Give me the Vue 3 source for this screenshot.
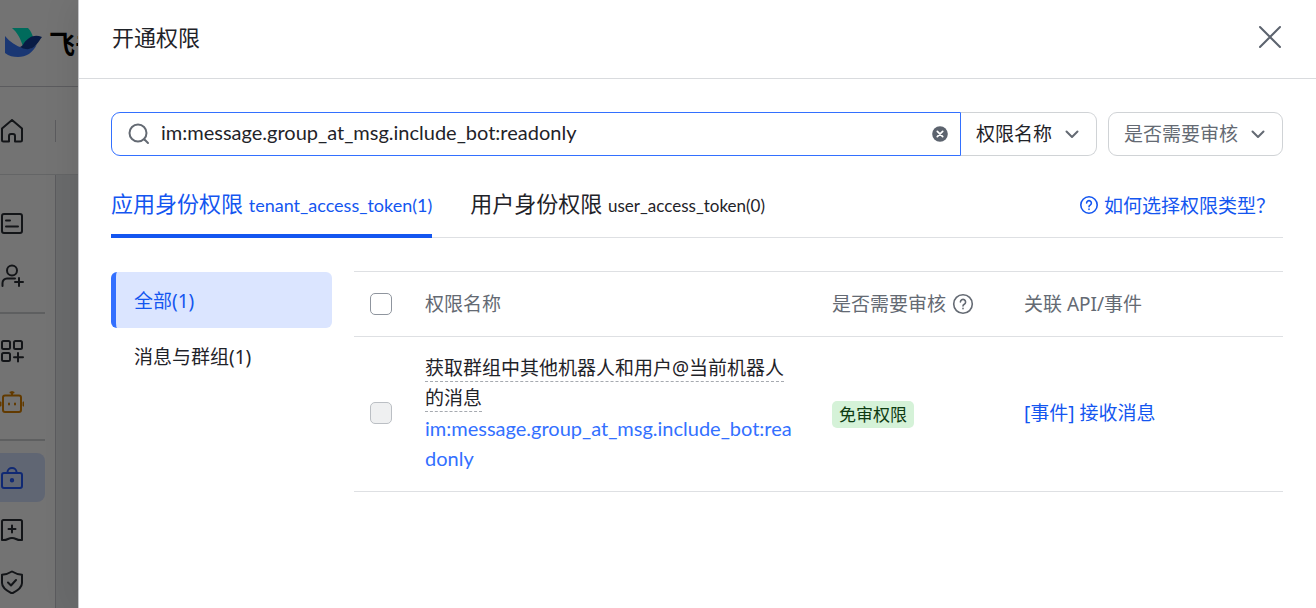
<script setup>
import { ref } from 'vue'

const query = ref('im:message.group_at_msg.include_bot:readonly')
const field = ref('name')
const review = ref('')
const allChecked = ref(false)
const activeTab = ref('tenant')
const activeGroup = ref('all')

const tabs = [
  { id: 'tenant', title: '应用身份权限', token: 'tenant_access_token(1)' },
  { id: 'user', title: '用户身份权限', token: 'user_access_token(0)' },
]
const groups = [
  { id: 'all', label: '全部(1)' },
  { id: 'im', label: '消息与群组(1)' },
]
const navGroups = [
  ['card', 'user'],
  ['apps', 'bot'],
  ['lock', 'bookmark', 'shield'],
]
const navLabels = {
  card: '凭证与基础信息',
  user: '成员管理',
  apps: '添加应用能力',
  bot: '机器人',
  lock: '权限管理',
  bookmark: '事件与回调',
  shield: '安全设置',
}
</script>

<template>
  <div class="page">
    <div class="backdrop-page" aria-hidden="true">
      <header class="brand">
        <svg class="logo" viewBox="0 0 38 32">
          <path d="M7 1h16c3 3 4 6 5 9l-10 10C16 12 12 5 7 1z" fill="#00edcc" />
          <path d="M0 9c5 6 11 10 18 12 6 2 11 0 14-4-4 9-11 13-19 13-5 0-9-1-13-4z" fill="#3b7aff" />
          <path d="M37 10c-8-3-13 0-18 6-1 2-2 3-4 4 7 4 13 2 16-2 3-3 4-6 6-8z" fill="#133c9a" />
        </svg>
        <span class="brand-name">飞书</span>
      </header>
      <div class="crumbs">
        <svg class="icon" viewBox="0 0 24 24"><path d="M2 9.500 12 1l10 8.500V21a1.500 1.500 0 0 1-1.500 1.500H15V17a2 2 0 0 0-2-2h-2a2 2 0 0 0-2 2v5.500H3.500A1.500 1.500 0 0 1 2 21z" /></svg>
        <span class="crumb-line"></span>
      </div>
      <div class="body">
        <nav class="side">
          <div v-for="(items, i) in navGroups" :key="i" class="nav-group">
            <a v-for="name in items" :key="name" href="#" tabindex="-1" class="nav-item" :class="name" :aria-label="navLabels[name]">
              <svg class="icon" viewBox="0 0 24 24">
                <template v-if="name === 'card'"><rect x="2" y="2" width="20" height="19" rx="2" /><path d="M6 8.500h4M6 14.500h12" /></template>
                <template v-else-if="name === 'user'"><circle cx="12" cy="6.500" r="5" /><path d="M2.500 22v-3a4.500 4.500 0 0 1 4.500-4.500h8M19 14v8M15 18h8" /></template>
                <template v-else-if="name === 'apps'"><rect x="2" y="2" width="8" height="8" rx="1.500" /><rect x="14" y="2" width="8" height="8" rx="1.500" /><rect x="2" y="14" width="8" height="8" rx="1.500" /><path d="M18 14v8.500M14 18.200h9" /></template>
                <template v-else-if="name === 'bot'"><rect x="3" y="4.500" width="18" height="16.500" rx="2" /><path d="M12 4V1M10.500 1.500h3M.5 11.500v3M23.500 11.500v3M9 12.500v1M15 12.500v1" /></template>
                <template v-else-if="name === 'lock'"><rect x="2" y="7" width="20" height="15" rx="2" /><path d="M7.500 7V6a4.500 4 0 0 1 9 0v1" /><circle cx="12" cy="14.300" r="1.200" /></template>
                <template v-else-if="name === 'bookmark'"><path d="M2 3.500A1.500 1.500 0 0 1 3.500 2h17A1.500 1.500 0 0 1 22 3.500V22c-2 .3-4 0-6-1-2.500-1.200-5.500-1.200-8 0-2 1-4 1.300-6 1zM12 7.500v7M8.500 11h7" /></template>
                <template v-else><path d="M12 1.500c3.500 2.200 6.500 3 10 3.200V13c0 5-5 8-10 10.500C7 21 2 18 2 13V4.700c3.500-.2 6.500-1 10-3.200zM8 12.500l3 3 5-5.500" /></template>
              </svg>
            </a>
          </div>
        </nav>
        <div class="canvas"></div>
      </div>
    </div>
    <div class="mask"></div>

    <section class="drawer" role="dialog" aria-labelledby="drawer-title">
      <header class="drawer-head">
        <h1 id="drawer-title">开通权限</h1>
        <button type="button" class="close" aria-label="关闭">
          <svg viewBox="0 0 24 24"><path d="M2 2l20 20M22 2 2 22" /></svg>
        </button>
      </header>

      <div class="drawer-body">
        <div class="filters">
          <div class="search">
            <svg class="glass" viewBox="0 0 22 22"><circle cx="10" cy="10" r="8.500" /><path d="M16.500 16.500 20 20" /></svg>
            <input v-model="query" type="text" aria-label="搜索权限" spellcheck="false" />
            <button type="button" class="clear" aria-label="清除" @click="query = ''">
              <svg viewBox="0 0 16 16"><circle cx="8" cy="8" r="7.800" fill="#5c636e" /><path d="M5.300 5.300l5.400 5.400M10.700 5.300l-5.400 5.400" stroke="#fff" stroke-width="1.700" stroke-linecap="round" /></svg>
            </button>
          </div>
          <div class="pick joined">
            <select v-model="field" aria-label="搜索字段"><option value="name">权限名称</option></select>
            <svg viewBox="0 0 14 14"><path d="M1.500 4.500 7 10l5.500-5.500" /></svg>
          </div>
          <div class="pick solo">
            <select v-model="review" aria-label="审核筛选"><option value="">是否需要审核</option></select>
            <svg viewBox="0 0 14 14"><path d="M1.500 4.500 7 10l5.500-5.500" /></svg>
          </div>
        </div>

        <div class="tabs">
          <div class="tab-list" role="tablist">
            <button v-for="t in tabs" :key="t.id" type="button" role="tab" class="tab" :class="{ active: activeTab === t.id }" :aria-selected="activeTab === t.id" @click="activeTab = t.id">
              {{ t.title }} <span class="token">{{ t.token }}</span>
            </button>
          </div>
          <a href="#" class="help">
            <svg viewBox="0 0 20 20"><circle cx="10" cy="10" r="8.200" /><path d="M7.600 8a2.400 2.400 0 1 1 3.600 2.100c-.8.500-1.200.9-1.200 1.700M10 14v.4" /></svg>
            <span>如何选择权限类型？</span>
          </a>
        </div>

        <div class="content">
          <nav class="groups" aria-label="权限分组">
            <button v-for="g in groups" :key="g.id" type="button" class="group" :class="{ active: activeGroup === g.id }" @click="activeGroup = g.id">{{ g.label }}</button>
          </nav>

          <table>
            <colgroup><col class="c-check" /><col class="c-name" /><col class="c-review" /><col /></colgroup>
            <thead>
              <tr>
                <th><input v-model="allChecked" type="checkbox" aria-label="全选" /></th>
                <th>权限名称</th>
                <th>
                  <span class="with-icon">是否需要审核
                    <svg viewBox="0 0 22 22"><circle cx="11" cy="11" r="9.300" /><path d="M8.400 9a2.600 2.600 0 1 1 3.900 2.300c-.9.500-1.300.9-1.300 1.700M11 15.300v.4" /></svg>
                  </span>
                </th>
                <th>关联 API/事件</th>
              </tr>
            </thead>
            <tbody>
              <tr>
                <td><input type="checkbox" disabled aria-label="选择该权限" /></td>
                <td>
                  <div class="scope-name"><span>获取群组中其他机器人和用户@当前机器人的消息</span></div>
                  <div class="scope-key">im:message.group_at_msg.include_bot:readonly</div>
                </td>
                <td><span class="tag">免审权限</span></td>
                <td><a href="#" class="event">[事件] 接收消息</a></td>
              </tr>
            </tbody>
          </table>
        </div>
      </div>
    </section>
  </div>
</template>

<style>
html,
body {
  margin: 0;
}
</style>

<style scoped>
.page {
  position: relative;
  min-height: 100vh;
  overflow: hidden;
  font-family: "Noto Sans", "Noto Sans CJK SC", sans-serif;
  font-size: 19px;
  color: #1f2329;
}
.page * {
  box-sizing: border-box;
}
button,
input,
select {
  font: inherit;
  color: inherit;
  margin: 0;
  padding: 0;
  border: 0;
  background: none;
  outline: none;
}
button {
  cursor: pointer;
}
a {
  text-decoration: none;
}
svg {
  display: block;
  flex: none;
  fill: none;
}

.backdrop-page {
  position: absolute;
  inset: 0;
  display: flex;
  flex-direction: column;
  background: #fff;
}
.brand {
  flex: none;
  display: flex;
  align-items: center;
  gap: 6px;
  height: 87px;
  padding-left: 5px;
  border-bottom: 1px solid #c9cbd0;
}
.logo {
  width: 38px;
  height: 32px;
}
.brand-name {
  font-size: 26px;
  font-weight: 700;
  color: #000;
}
.crumbs {
  flex: none;
  display: flex;
  align-items: center;
  gap: 31px;
  height: 88px;
  border-bottom: 1px solid #dee0e3;
}
.crumb-line {
  width: 1px;
  height: 22px;
  background: #c9cbd0;
}
.icon {
  width: 24px;
  height: 24px;
  stroke: #2b2f36;
  stroke-width: 2;
  stroke-linecap: round;
  stroke-linejoin: round;
}
.body {
  flex: 1;
  display: flex;
}
.side {
  width: 56px;
  padding-top: 24px;
  border-right: 1px solid #c9cbd0;
}
.nav-group + .nav-group {
  margin: 12px 10px 0 0;
  padding-top: 12px;
  border-top: 2px solid #d0d3d6;
}
.nav-item {
  display: flex;
  align-items: center;
  width: 45px;
  height: 49px;
  margin-bottom: 3px;
  border-radius: 0 8px 8px 0;
}
.nav-item.lock {
  background: #d6e2ff;
}
.nav-item.lock .icon {
  stroke: #245bff;
}
.nav-item.bot .icon {
  stroke: #d98200;
}
.canvas {
  flex: 1;
  background: #ecedf0;
}
.mask {
  position: absolute;
  inset: 0;
  background: rgba(0, 0, 0, 0.55);
}

.drawer {
  position: absolute;
  inset: 0 0 0 78px;
  background: #fff;
  border-left: 1px solid #c4c5c8;
  box-shadow: -4px 0 32px rgba(0, 0, 0, 0.08);
}
.drawer-head {
  display: flex;
  align-items: center;
  justify-content: space-between;
  height: 79px;
  padding: 0 34px 4px 33px;
  border-bottom: 1px solid #d9dbde;
}
h1 {
  margin: 0;
  font-size: 22px;
  font-weight: 400;
  line-height: 32px;
}
.close svg {
  width: 24px;
  height: 24px;
  stroke: #5c636e;
  stroke-width: 2;
  stroke-linecap: round;
}
.drawer-body {
  padding: 33px 33px 0 32px;
}

.filters {
  display: flex;
}
.search {
  flex: 1;
  display: flex;
  align-items: center;
  height: 44px;
  padding: 0 12px 0 16px;
  border: 1px solid #3370ff;
  border-radius: 9px 0 0 9px;
}
.glass {
  width: 22px;
  height: 22px;
  stroke: #646a73;
  stroke-width: 2;
  stroke-linecap: round;
}
.search input {
  flex: 1;
  min-width: 0;
  height: 30px;
  margin: 0 16px 0 11px;
  padding-bottom: 4px;
}
.search input,
.scope-key {
  font-family: Lato, "Noto Sans CJK SC", sans-serif;
  font-size: 20px;
}
.clear svg {
  width: 16px;
  height: 16px;
}
.pick {
  position: relative;
  height: 44px;
  border: 1px solid #d0d3d6;
}
.pick select {
  appearance: none;
  width: 100%;
  height: 100%;
  padding-left: 15px;
}
.pick svg {
  position: absolute;
  right: 17px;
  top: 14px;
  width: 14px;
  height: 14px;
  stroke: #646a73;
  stroke-width: 2;
  stroke-linecap: round;
  stroke-linejoin: round;
  pointer-events: none;
}
.joined {
  width: 136px;
  border-left: 0;
  border-radius: 0 9px 9px 0;
}
.solo {
  width: 175px;
  margin-left: 11px;
  border-radius: 9px;
  color: #646a73;
}

.tabs {
  display: flex;
  align-items: stretch;
  justify-content: space-between;
  height: 82px;
  border-bottom: 1px solid #dee0e3;
}
.tab-list {
  display: flex;
  gap: 38px;
  margin-bottom: -1px;
}
.tab {
  padding: 14px 0 0;
  border-radius: 4px 4px 0 0;
  font-size: 22px;
  line-height: 32px;
  white-space: nowrap;
}
.tab .token {
  font-family: Lato, "Noto Sans CJK SC", sans-serif;
  font-size: 17px;
}
.tab.active {
  color: #1456f0;
  background: linear-gradient(#1456f0, #1456f0) bottom / 100% 4px no-repeat;
}
.tab.active .token {
  font-size: 18px;
}
.help {
  display: flex;
  align-items: center;
  gap: 5px;
  padding: 16px 8px 0 0;
  color: #1456f0;
}
.help svg {
  width: 20px;
  height: 20px;
  stroke: #1456f0;
  stroke-width: 1.6;
  stroke-linecap: round;
}

.content {
  display: flex;
  align-items: flex-start;
  gap: 22px;
  padding-top: 33px;
}
.groups {
  flex: none;
  width: 221px;
  padding-top: 1px;
}
.group {
  display: block;
  width: 100%;
  height: 56px;
  padding: 0 0 1px 18px;
  border-left: 5px solid transparent;
  border-radius: 6px;
  text-align: left;
}
.group.active {
  color: #1456f0;
  background: #dbe5ff;
  border-left-color: #3370ff;
}

table {
  flex: 1;
  min-width: 0;
  table-layout: fixed;
  border-collapse: separate;
  border-spacing: 0;
  border-top: 1px solid #dee0e3;
}
.c-check {
  width: 55px;
}
.c-name {
  width: 407px;
}
.c-review {
  width: 192px;
}
th,
td {
  padding: 16px;
  border-bottom: 1px solid #dee0e3;
  font-weight: 400;
  text-align: left;
  line-height: 30px;
  vertical-align: middle;
}
th {
  height: 65px;
  color: #646a73;
}
td {
  padding-bottom: 18px;
}
table input {
  appearance: none;
  display: block;
  width: 22px;
  height: 22px;
  border: 1px solid #8f959e;
  border-radius: 5px;
}
table input:disabled {
  background: #eff0f1;
  border-color: #bbbfc4;
}
.with-icon {
  display: flex;
  align-items: center;
  gap: 6px;
  white-space: nowrap;
}
.with-icon svg {
  width: 22px;
  height: 22px;
  stroke: #646a73;
  stroke-width: 1.6;
  stroke-linecap: round;
}
.scope-name {
  word-break: break-all;
}
.scope-name span {
  border-bottom: 1px dashed #a6aab0;
}
.scope-key {
  color: #3370ff;
  word-break: break-all;
}
.tag {
  display: inline-block;
  padding: 0 7px;
  border-radius: 5px;
  background: #d5f2d8;
  color: #0d3b12;
  font-size: 17px;
  line-height: 27px;
  vertical-align: middle;
}
.event {
  color: #1456f0;
}
</style>
